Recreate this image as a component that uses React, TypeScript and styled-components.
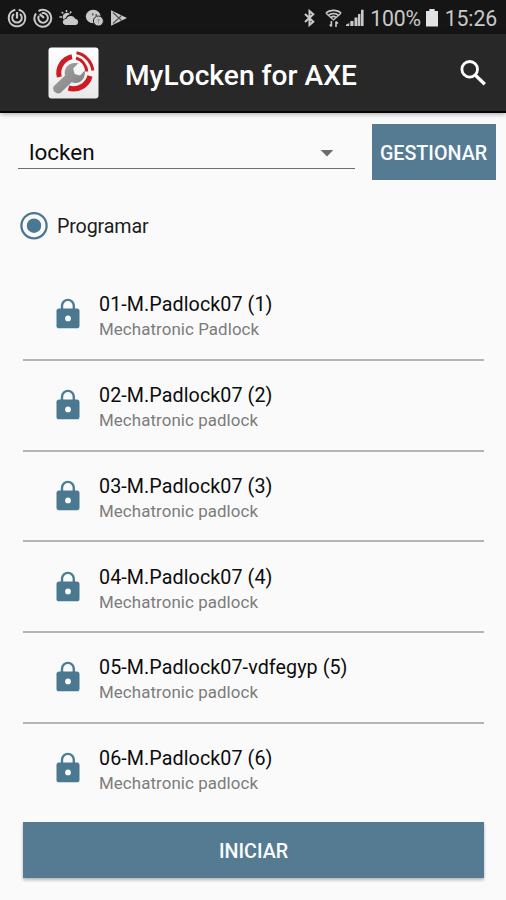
import React from "react";
import styled, { createGlobalStyle } from "styled-components";

const GlobalStyle = createGlobalStyle`
  * { box-sizing: border-box; }
  body { margin: 0; background: #fafafa; font-family: Roboto, "Noto Sans", sans-serif; }
  svg { display: block; flex: none; }
`;

const Screen = styled.div`
  width: 506px;
  height: 900px;
  overflow: hidden;
  display: flex;
  flex-direction: column;
  background: #fafafa;
  color: #0c0c0c;
`;

const StatusBar = styled.div`
  height: 34px;
  flex: none;
  display: flex;
  align-items: center;
  justify-content: space-between;
  padding: 2px 9px 0 7px;
  background: #151515;
  color: #c9c9c9;
`;

const StatusGroup = styled.div`
  display: flex;
  align-items: center;
`;

const StatusText = styled.span<{ $width: number }>`
  width: ${(p) => p.$width}px;
  padding-top: 2px;
  font-size: 21.2px;
  line-height: 34px;
  text-align: right;
  letter-spacing: -0.1px;
  white-space: nowrap;
`;

const Toolbar = styled.header`
  height: 79px;
  flex: none;
  display: flex;
  align-items: center;
  padding: 1px 19px 0 48px;
  background: #282828;
  border-bottom: 2px solid #050505;
  box-shadow: 0 1px 5px rgba(0, 0, 0, 0.35);
`;

const Title = styled.h1`
  flex: 1;
  margin: 5px 0 0 26px;
  font-size: 28.1px;
  line-height: 34px;
  font-weight: 500;
  letter-spacing: 0.05px;
  color: #fff;
  white-space: nowrap;
`;

const Controls = styled.div`
  display: flex;
  height: 67px;
  flex: none;
  padding: 11px 10.5px 0 18px;
  justify-content: space-between;
`;

const Select = styled.div`
  width: 337px;
  height: 45px;
  display: flex;
  align-items: center;
  justify-content: space-between;
  padding: 11px 21px 0 11px;
  border-bottom: 1.5px solid #6e6e6e;
  font-size: 22.5px;
  line-height: 28px;
`;

const Button = styled.button<{ $wide?: boolean }>`
  flex: none;
  width: ${(p) => (p.$wide ? 461 : 124)}px;
  height: 56px;
  margin: ${(p) => (p.$wide ? "7px 0 0 23px" : "0")};
  padding: ${(p) => (p.$wide ? "4px 0 0" : "3px 0 0")};
  border: 0;
  background: #557b93;
  color: #fafdff;
  font-family: inherit;
  font-size: 19.7px;
  font-weight: 500;
  box-shadow: ${(p) => (p.$wide ? "0 2px 3px rgba(0, 0, 0, 0.28)" : "none")};
`;

const RadioRow = styled.label`
  display: flex;
  align-items: center;
  flex: none;
  gap: 9px;
  height: 30px;
  margin: 30.5px 0 29.5px 20px;
  font-size: 19.7px;
  line-height: 28px;
  letter-spacing: -0.15px;
  color: #1c1c1c;

  span { padding-top: 3px; }
`;

const List = styled.ul`
  width: 461px;
  margin: 0 0 0 23px;
  padding: 0;
  list-style: none;
  flex: none;
`;

const Item = styled.li`
  height: 90.75px;
  display: flex;
  align-items: center;
  padding: 0 0 0 33px;
  border-bottom: 2px solid #b4b4b4;
  &:last-child { border-bottom-color: transparent; }
`;

const ItemText = styled.div`
  margin-left: 19px;
  padding-top: 5px;
`;

const ItemName = styled.div`
  font-size: 19.7px;
  line-height: 26px;
  letter-spacing: 0.08px;
  white-space: nowrap;
`;

const ItemKind = styled.div`
  font-size: 16.9px;
  line-height: 23px;
  letter-spacing: 0.08px;
  color: #7c7c7c;
  white-space: nowrap;
`;

const SyncIcon = ({ open }: { open?: boolean }) => (
  <svg width="20" height="20" viewBox="0 0 20 20" fill="none" stroke="#c9c9c9" strokeWidth="2">
    {open ? (
      <>
        <path d="M8.3 1.8A8.4 8.4 0 0 0 8.3 18.2M11.7 1.8A8.4 8.4 0 0 1 11.7 18.2M8.3 18.2h3.4" />
        <path d="M7 6A4.8 4.8 0 1 0 13 6" />
        <path d="M10 4V10.5" strokeWidth="2.2" />
      </>
    ) : (
      <>
        <path d="M5.5 3.1A8.4 8.4 0 1 1 3 5.4" />
        <path d="M8.8 5.3A4.8 4.8 0 1 1 5.8 7.8" />
        <path d="M6.6 6 11 9.8" strokeWidth="2.2" />
      </>
    )}
  </svg>
);

const WeatherIcon = () => (
  <svg width="20" height="18" viewBox="0 0 20 18" fill="#c9c9c9">
    <path d="M.5 8H3M2.7 3l1.6 1.5M7.5 1v2M12.3 2.6l-1.4 1.6" stroke="#c9c9c9" strokeWidth="1.5" />
    <path d="M4 9.5A4.2 4.2 0 0 1 11 5.2C8.8 5.8 7.2 7.2 6.8 9.1 5.9 9.3 5.2 9.8 4.8 10.5Z" />
    <path d="M6.5 16a3 3 0 0 1 .8-6 4.8 4.8 0 0 1 8.9-.2A3.2 3.2 0 0 1 17 16Z" />
  </svg>
);

const ChatIcon = () => (
  <svg width="19" height="18" viewBox="0 0 19 18">
    <path d="M8.2.7a7.4 6.8 0 1 0 0 13.6A7.4 6.8 0 0 0 8.2.7Z" fill="#c9c9c9" />
    <path d="M7.8 4.3v2.2M11.2 5v2" stroke="#555" strokeWidth="1.4" />
    <circle cx="13.4" cy="12" r="5" fill="#c9c9c9" stroke="#222" />
    <path d="M13.5 9.5v5M11.8 11h3.4" stroke="#999" />
  </svg>
);

const PlayIcon = () => (
  <svg width="18" height="18" viewBox="0 0 18 18">
    <path d="M1 1.2 17 9 1 16.8Z" fill="#c9c9c9" />
    <path d="M3 3.5 11.5 11.5M3 14.5 11.5 6.5" stroke="#505050" strokeWidth="1.1" />
  </svg>
);

const BluetoothIcon = () => (
  <svg width="13" height="18" viewBox="0 0 13 18" fill="none" stroke="#c9c9c9" strokeWidth="2">
    <path d="M2 5 10.3 12.7 6.5 16V2L10.3 5.3 2 13" />
  </svg>
);

const WifiIcon = () => (
  <svg width="17" height="19" viewBox="0 0 17 19" fill="none" stroke="#c9c9c9" strokeWidth="1.7">
    <path d="M1 4.3C4.5.3 12.5.3 16 4.3M3.5 6.3c2.6-2.4 7.4-2.4 10 0M6 8.5c1.5-1.3 3.5-1.3 5 0" />
    <path d="M1 4.3 8.5 11 16 4.3" strokeWidth="1.2" />
    <path d="M6.4 12v5.5M4.8 15.6l1.6 2M11 18v-5.5M12.8 14.6l-1.8-2" strokeWidth="1.6" />
  </svg>
);

const SignalIcon = () => (
  <svg width="18" height="18" viewBox="0 0 18 18" fill="#c9c9c9">
    <path d="M0 15.8 3.2 14V17H0ZM4.3 12h3.2v5H4.3ZM8.5 8.6h3V17h-3ZM12 5h2.4v12H12ZM15 .8h2.6V17H15Z" />
  </svg>
);

const BatteryIcon = () => (
  <svg width="12" height="18" viewBox="0 0 12 18" fill="#e2e2e2">
    <path d="M3.3 0h5.4v2H12v15.5H0V2h3.3Z" />
  </svg>
);

const AppLogo = () => (
  <svg width="51" height="52" viewBox="0 0 51 52">
    <defs>
      <linearGradient id="tile" x1="0" y1="0" x2="0" y2="1">
        <stop offset="0" stopColor="#fff" />
        <stop offset="1" stopColor="#e9e9e9" />
      </linearGradient>
      <linearGradient id="steel" x1="0" y1="0" x2="1" y2="1">
        <stop offset="0" stopColor="#aaa" />
        <stop offset="1" stopColor="#7b7b7b" />
      </linearGradient>
    </defs>
    <rect x=".5" y=".5" width="50" height="51" rx="3" fill="url(#tile)" />
    <g fill="none" stroke="#cd1c24">
      <path d="M11.3 30A16.5 16.5 0 0 1 24 9.8" strokeWidth="5" />
      <path d="M28 11A15.5 15.5 0 0 1 38.8 24.5" strokeWidth="3" />
      <path d="M28.5 5.8A20.5 20.5 0 0 1 44.8 23.5" strokeWidth="3" />
      <path d="M42 29A17 17 0 0 1 20.5 41" strokeWidth="5.2" />
    </g>
    <path
      d="M5.7 39.2 17 28.5C15.3 21 21 14.3 30.3 16.3L25.2 21.5 26.6 27 32 28.4 36.8 23.4C38 32.5 31 38 23.5 35.2L13 45.4C9.2 48.5 3.2 43.7 5.7 39.2Z"
      fill="url(#steel)"
    />
  </svg>
);

const SearchIcon = () => (
  <svg width="28" height="28" viewBox="0 0 28 28" fill="none" stroke="#fff" strokeWidth="2.8">
    <circle cx="10.7" cy="10.3" r="7.8" />
    <path d="M16.2 16 25.8 25.3" strokeWidth="3.3" />
  </svg>
);

const CaretIcon = () => (
  <svg width="14" height="10" viewBox="0 0 14 10">
    <path d="M.7 3h12.6L7 9.6Z" fill="#6c6c6c" />
  </svg>
);

const RadioIcon = () => (
  <svg width="28" height="28" viewBox="0 0 28 28">
    <circle cx="14" cy="13.7" r="12.6" fill="none" stroke="#4a7890" strokeWidth="2.3" />
    <circle cx="14" cy="13.7" r="7.2" fill="#4a7890" />
  </svg>
);

const LockIcon = () => (
  <svg width="24" height="32" viewBox="0 0 24 32">
    <path d="M6 12V7.8a5.9 5.9 0 0 1 11.8 0V12" fill="none" stroke="#4a7d96" strokeWidth="2.4" />
    <rect x=".5" y="10.6" width="23" height="19.7" rx="2.6" fill="#4a7890" />
    <circle cx="12" cy="20.4" r="2.9" fill="#fafafa" />
  </svg>
);

const padlocks = [
  { name: "01-M.Padlock07 (1)", kind: "Mechatronic Padlock" },
  { name: "02-M.Padlock07 (2)", kind: "Mechatronic padlock" },
  { name: "03-M.Padlock07 (3)", kind: "Mechatronic padlock" },
  { name: "04-M.Padlock07 (4)", kind: "Mechatronic padlock" },
  { name: "05-M.Padlock07-vdfegyp (5)", kind: "Mechatronic padlock" },
  { name: "06-M.Padlock07 (6)", kind: "Mechatronic padlock" },
];

const Notifications = styled(StatusGroup)`
  gap: 6px;
`;

const Radios = styled(StatusGroup)`
  gap: 4px;

  svg:first-child { margin-right: 5px; }
`;

const SystemStatus = styled(StatusGroup)`
  gap: 5px;
`;

export default function App() {
  return (
    <Screen>
      <GlobalStyle />
      <StatusBar>
        <Notifications>
          <SyncIcon open />
          <SyncIcon />
          <WeatherIcon />
          <ChatIcon />
          <PlayIcon />
        </Notifications>
        <SystemStatus>
          <Radios>
            <BluetoothIcon />
            <WifiIcon />
            <SignalIcon />
          </Radios>
          <StatusText $width={52}>100%</StatusText>
          <BatteryIcon />
          <StatusText $width={54}>15:26</StatusText>
        </SystemStatus>
      </StatusBar>
      <Toolbar>
        <AppLogo />
        <Title>MyLocken for AXE</Title>
        <SearchIcon />
      </Toolbar>
      <Controls>
        <Select>
          <span>locken</span>
          <CaretIcon />
        </Select>
        <Button>GESTIONAR</Button>
      </Controls>
      <RadioRow>
        <RadioIcon />
        <span>Programar</span>
      </RadioRow>
      <List>
        {padlocks.map((p) => (
          <Item key={p.name}>
            <LockIcon />
            <ItemText>
              <ItemName>{p.name}</ItemName>
              <ItemKind>{p.kind}</ItemKind>
            </ItemText>
          </Item>
        ))}
      </List>
      <Button $wide>INICIAR</Button>
    </Screen>
  );
}
